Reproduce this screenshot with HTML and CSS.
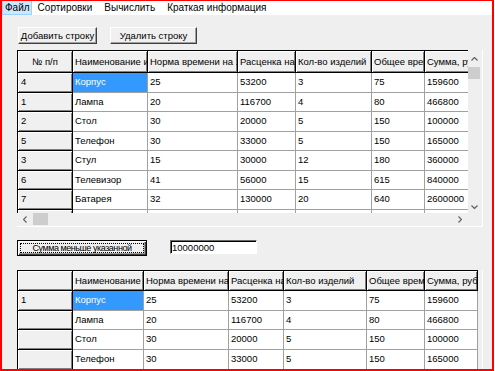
FILE: index.html
```html
<!DOCTYPE html>
<html lang="ru">
  <head>
    <meta charset="UTF-8" />
    <title>Изделия</title>
    <link rel="stylesheet" href="styles.css">
  </head>

  <body>
    <div class="window">
      <ul class="menu">
        <li class="active">Файл</li>
        <li>Сортировки</li>
        <li>Вычислить</li>
        <li>Краткая информация</li>
      </ul>

      <div class="content">
        <div class="toolbar">
          <button class="btn btn-add">Добавить строку</button>
          <button class="btn btn-del">Удалить строку</button>
        </div>

        <div class="grid grid-main">
          <div class="view">
            <table class="table-main">
              <colgroup>
                <col class="c-rh"><col class="c1"><col class="c2"><col class="c3"><col class="c4"><col class="c5"><col class="c6">
              </colgroup>
              <thead>
                <tr>
                  <th class="center">№ п/п</th>
                  <th>Наименование изделия</th>
                  <th>Норма времени на 1 изделие</th>
                  <th>Расценка на 1 изделие</th>
                  <th>Кол-во изделий</th>
                  <th>Общее время</th>
                  <th>Сумма, руб.</th>
                </tr>
              </thead>
              <tbody>
                <tr><th>4</th><td class="selected">Корпус</td><td>25</td><td>53200</td><td>3</td><td>75</td><td>159600</td></tr>
                <tr><th>1</th><td>Лампа</td><td>20</td><td>116700</td><td>4</td><td>80</td><td>466800</td></tr>
                <tr><th>2</th><td>Стол</td><td>30</td><td>20000</td><td>5</td><td>150</td><td>100000</td></tr>
                <tr><th>5</th><td>Телефон</td><td>30</td><td>33000</td><td>5</td><td>150</td><td>165000</td></tr>
                <tr><th>3</th><td>Стул</td><td>15</td><td>30000</td><td>12</td><td>180</td><td>360000</td></tr>
                <tr><th>6</th><td>Телевизор</td><td>41</td><td>56000</td><td>15</td><td>615</td><td>840000</td></tr>
                <tr><th>7</th><td>Батарея</td><td>32</td><td>130000</td><td>20</td><td>640</td><td>2600000</td></tr>
                <tr><th></th><td></td><td></td><td></td><td></td><td></td><td></td></tr>
              </tbody>
            </table>
          </div>
          <div class="vscroll">
            <div class="arrow arrow-up">
              <svg width="7" height="4" viewBox="0 0 7 4"><polyline points="0.5,3.5 3.5,0.5 6.5,3.5" /></svg>
            </div>
            <div class="thumb"></div>
            <div class="track"></div>
            <div class="arrow arrow-down">
              <svg width="7" height="4" viewBox="0 0 7 4"><polyline points="0.5,0.5 3.5,3.5 6.5,0.5" /></svg>
            </div>
          </div>
          <div class="hscroll">
            <div class="arrow arrow-left">
              <svg width="4" height="7" viewBox="0 0 4 7"><polyline points="3.5,0.5 0.5,3.5 3.5,6.5" /></svg>
            </div>
            <div class="thumb"></div>
            <div class="track"></div>
            <div class="arrow arrow-right">
              <svg width="4" height="7" viewBox="0 0 4 7"><polyline points="0.5,0.5 3.5,3.5 0.5,6.5" /></svg>
            </div>
          </div>
          <div class="corner"></div>
        </div>

        <div class="filter">
          <button class="btn btn-default">Сумма меньше указанной</button>
          <input class="field" type="text" value="10000000" />
        </div>

        <div class="grid grid-result">
          <div class="view">
            <table class="table-result">
              <colgroup>
                <col class="c-rh"><col class="c1"><col class="c2"><col class="c3"><col class="c4"><col class="c5"><col class="c6">
              </colgroup>
              <thead>
                <tr>
                  <th></th>
                  <th>Наименование изделия</th>
                  <th>Норма времени на 1 изделие</th>
                  <th>Расценка на 1 изделие</th>
                  <th>Кол-во изделий</th>
                  <th>Общее время</th>
                  <th>Сумма, руб.</th>
                </tr>
              </thead>
              <tbody>
                <tr><th>1</th><td class="selected">Корпус</td><td>25</td><td>53200</td><td>3</td><td>75</td><td>159600</td></tr>
                <tr><th></th><td>Лампа</td><td>20</td><td>116700</td><td>4</td><td>80</td><td>466800</td></tr>
                <tr><th></th><td>Стол</td><td>30</td><td>20000</td><td>5</td><td>150</td><td>100000</td></tr>
                <tr><th></th><td>Телефон</td><td>30</td><td>33000</td><td>5</td><td>150</td><td>165000</td></tr>
                <tr><th></th><td>Стул</td><td>15</td><td>30000</td><td>12</td><td>180</td><td>360000</td></tr>
              </tbody>
            </table>
          </div>
        </div>
      </div>
    </div>
  </body>
</html>
```

FILE: styles.css
```css
body {
  margin: 0;
  background: #fff;
  font-family: "Liberation Sans", Arial, sans-serif;
}
.window {
  width: 494px;
  height: 371px;
  box-sizing: border-box;
  border: 2px solid #ff0000;
  border-top-width: 1px;
  background-color: #efefef;
  background-image: radial-gradient(#fff 0.5px, transparent 0.7px);
  background-size: 6px 4px;
  overflow: hidden;
}

/* menu */
.menu {
  display: flex;
  margin: 0;
  padding: 0;
  list-style: none;
  height: 14px;
  background: #fff;
  font-size: 10px;
  line-height: 13px;
}
.menu li {
  padding: 0 5px;
  border: 1px solid transparent;
  border-top: 0;
}
.menu .active {
  padding: 0 1px 0 2px;
  background: #cce8ff;
  border-color: #99d1ff;
}

.content {
  padding-left: 15px;
}

/* buttons */
.toolbar {
  display: flex;
  gap: 13px;
  margin-top: 12px;
  padding-left: 1px;
}
.btn {
  font-family: "Liberation Sans", Arial, sans-serif;
  font-size: 9.5px;
  color: #000;
  height: 17px;
  padding: 0;
  background: #f0f0f0;
  border: 1px solid;
  border-color: #fff #404040 #404040 #fff;
  box-shadow: inset -1px -1px 0 #a0a0a0;
}
.btn-add {
  width: 79px;
}
.btn-del {
  width: 87px;
}
.btn-default {
  width: 130px;
  height: 16px;
  font-size: 9px;
  letter-spacing: -0.45px;
  border-color: #000;
  box-shadow: inset 1px 1px 0 #fff, inset -1px -1px 0 #404040, inset -2px -2px 0 #a0a0a0;
  outline: 1px dotted #000;
  outline-offset: -4px;
}

.filter {
  display: flex;
  align-items: flex-start;
  margin-top: 13px;
}
.field {
  margin-left: 23px;
  width: 87px;
  height: 14px;
  box-sizing: border-box;
  padding: 0 1px;
  font-family: "Liberation Sans", Arial, sans-serif;
  font-size: 9.5px;
  background: #fff;
  border: 1px solid;
  border-color: #696969 #fff #fff #696969;
  box-shadow: inset 1px 1px 0 #000;
}

/* data grids */
.grid {
  width: 466px;
  box-sizing: border-box;
  border-right: 1px solid #fff;
  border-bottom: 1px solid #fff;
}
.grid-main {
  margin-top: 6px;
  height: 177px;
  display: grid;
  grid-template-columns: 451px 14px;
  grid-template-rows: 163px 13px;
}
.grid-result {
  margin-top: 14px;
  height: 110px;
}
.view {
  overflow: hidden;
}
.grid table {
  table-layout: fixed;
  border-collapse: separate;
  border-spacing: 0;
  border-top: 1px solid #000;
  border-left: 1px solid #000;
  font-size: 9.5px;
}
.grid th,
.grid td {
  padding: 0 2px;
  white-space: nowrap;
  overflow: hidden;
  text-overflow: clip;
  text-align: left;
  font-weight: normal;
  line-height: 11px;
}
.grid th {
  background: #f0f0f0;
  border-right: 1px solid #000;
  border-bottom: 1px solid #000;
  box-shadow: inset 1px 1px 0 #fff, inset -1px -1px 0 #808080;
}
.grid td {
  background: #fff;
  border-right: 1px solid #a0a0a0;
  border-bottom: 1px solid #a0a0a0;
  vertical-align: top;
  padding-top: 3px;
}
.grid tbody th {
  vertical-align: top;
  padding-top: 3px;
  padding-left: 3px;
}
.grid .center {
  text-align: center;
}
.grid td.selected {
  background: #3399ff;
  color: #fff;
}

.table-main {
  width: 478px;
}
.table-main thead tr {
  height: 22px;
}
.table-main tbody tr {
  height: 19.5px;
}
.table-main .c-rh { width: 55px; }
.table-main .c1 { width: 75px; }
.table-main .c2 { width: 90px; }
.table-main .c3 { width: 58px; }
.table-main .c4 { width: 76px; }
.table-main .c5 { width: 53px; }
.table-main .c6 { width: 70px; }

.table-result {
  width: 461px;
}
.table-result thead tr {
  height: 20px;
}
.table-result tbody tr {
  height: 19.7px;
}
.table-result .c-rh { width: 55px; }
.table-result .c1 { width: 71px; }
.table-result .c2 { width: 85px; }
.table-result .c3 { width: 55px; }
.table-result .c4 { width: 83px; }
.table-result .c5 { width: 58px; }
.table-result .c6 { width: 53px; }

/* scrollbars */
.vscroll {
  display: flex;
  flex-direction: column;
}
.hscroll {
  display: flex;
}
.arrow {
  display: flex;
  align-items: center;
  justify-content: center;
}
.arrow polyline {
  fill: none;
  stroke: #606060;
  stroke-width: 1.2;
}
.arrow-up {
  height: 17px;
  width: 12px;
}
.arrow-down {
  height: 13px;
  width: 12px;
}
.arrow-left {
  width: 16px;
}
.arrow-right {
  width: 16px;
}
.vscroll .thumb {
  width: 12px;
  height: 12px;
  background: #cdcdcd;
}
.hscroll .thumb {
  width: 15px;
  height: 12px;
  background: #cdcdcd;
}
.track {
  flex: 1;
}
```
